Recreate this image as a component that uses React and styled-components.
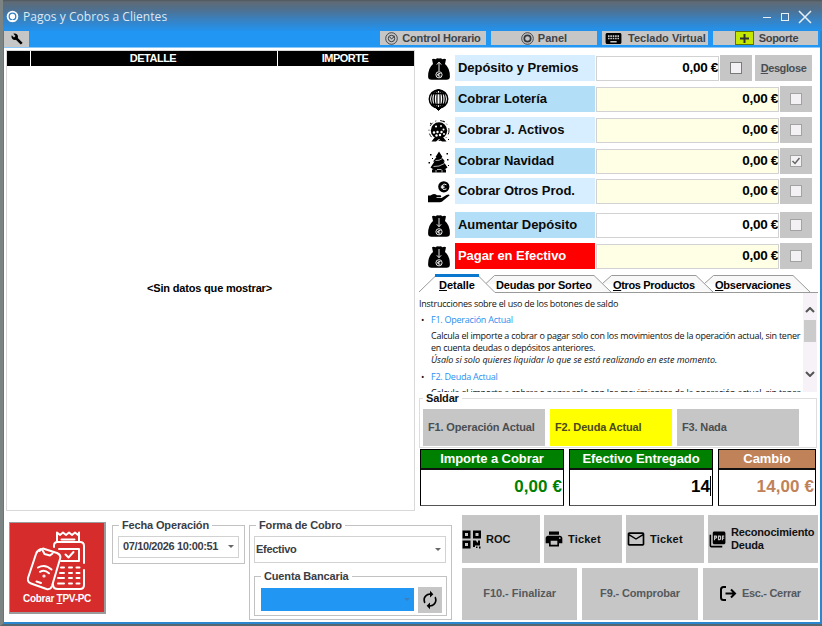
import React, { useState } from 'react';
import styled, { createGlobalStyle, css } from 'styled-components';
import { MdBuild, MdKeyboard, MdPrint, MdMailOutline, MdPictureAsPdf, MdAutorenew } from 'react-icons/md';

const GlobalStyle = createGlobalStyle`
    * {
        box-sizing: border-box;
    }

    body {
        margin: 0;
        overflow: hidden;
        font: bold 11px/13px "Liberation Sans", Arial, sans-serif;
        letter-spacing: -0.15px;
        color: #000;
    }

    button {
        font: inherit;
        letter-spacing: inherit;
        color: inherit;
        border: 0;
        padding: 0;
    }

    svg {
        display: block;
        flex: none;
    }
`;

const Window = styled.div`
    width: 822px;
    height: 626px;
    display: flex;
    flex-direction: column;
    background: #fff;
    border-left: 3px solid #7b8383;
    border-bottom: 2px solid #56676f;
`;

const TitleBar = styled.header`
    height: 31px;
    flex: none;
    display: flex;
    align-items: center;
    padding: 2px 10px 0 3px;
    background: linear-gradient(#50565c 0, #5f6b75 2px, #506f8c 9px, #3a80bd 19px, #2292ee 31px);
    color: #dfe9f2;
`;

const Title = styled.h1`
    flex: 1;
    margin: 0 0 0 4px;
    font: 12px/16px "Open Sans", "Noto Sans", sans-serif;
    letter-spacing: 0.05px;
`;

const WindowControls = styled.div`
    display: flex;
    align-items: center;
`;

const Frame = styled.div`
    flex: 1;
    display: flex;
    flex-direction: column;
    border: solid #2b86d0;
    border-width: 0 2px 2px 1px;
`;

const Toolbar = styled.nav`
    height: 17px;
    flex: none;
    display: flex;
    gap: 5px;
    align-items: flex-start;
    background: #2196f3;
    border-bottom: 1px solid #8cc8fa;
    padding-right: 2px;
`;

const ToolButton = styled.button`
    width: ${({ $width }) => $width || 106}px;
    height: 14px;
    display: flex;
    align-items: center;
    justify-content: center;
    gap: ${({ $gap }) => $gap || 4}px;
    background: #c6c6c6;
    color: #3f4347;
    letter-spacing: ${({ $spacing }) => $spacing || 0}px;
    padding-left: ${({ $indent }) => $indent || 0}px;
`;

const SettingsButton = styled(ToolButton)`
    width: 25px;
    height: 16px;
    margin-right: auto;
    color: #000;
`;

const PlusBox = styled.span`
    width: 19px;
    height: 14px;
    display: flex;
    align-items: center;
    justify-content: center;
    background: #c4e800;
    border: 1px solid #5f7300;
`;

const Upper = styled.div`
    display: flex;
    justify-content: space-between;
    height: 463px;
    padding: 2px 2px 0 2px;
`;

const Grid = styled.section`
    width: 409px;
    height: 461px;
    display: flex;
    flex-direction: column;
    border: 1px solid #d9d9d9;
`;

const GridHead = styled.div`
    display: grid;
    grid-template-columns: 23px 246px 1fr;
    gap: 1px;
    height: 15px;
    background: #fff;
`;

const GridHeadCell = styled.div`
    background: #000;
    color: #fff;
    text-align: center;
    line-height: 15px;
    letter-spacing: -0.5px;
    padding-right: 2px;
`;

const GridEmpty = styled.div`
    flex: 1;
    display: flex;
    align-items: center;
    justify-content: center;
    padding: 1px 2px 0 0;
    letter-spacing: -0.18px;
`;

const Side = styled.section`
    width: 399px;
    display: flex;
    flex-direction: column;
    padding-top: 5px;
`;

const Row = styled.div`
    display: flex;
    height: 26px;
    margin-bottom: ${({ $after }) => $after ?? 5}px;
    padding: 0 6px 0 8px;
`;

const RowIcon = styled.div`
    width: 28px;
    display: flex;
    align-items: center;
    padding: 2px 0 0 1px;
`;

const tones = { pale: '#d6eeff', sky: '#b3def7', red: '#ff0000' };

const RowLabel = styled.button`
    width: 140px;
    margin-right: 1px;
    text-align: left;
    padding: 0 0 1px 3px;
    font-size: 13px;
    letter-spacing: -0.05px;
    background: ${({ $tone }) => tones[$tone]};
    color: ${({ $tone }) => ($tone === 'red' ? '#fff' : '#0a0a0a')};
`;

const RowValue = styled.div`
    flex: 1;
    height: 25px;
    margin-top: 1px;
    padding-top: 3px;
    border: 1px solid #d2d2d2;
    text-align: right;
    font-size: 13.5px;
    line-height: 15px;
    letter-spacing: -0.3px;
    background: ${({ $locked }) => ($locked ? '#ffffe6' : '#fff')};
`;

const RowCheck = styled.label`
    width: 32px;
    margin-left: 1px;
    display: flex;
    align-items: center;
    justify-content: center;
    background: #c6c6c6;
`;

const CheckBox = styled.span`
    width: 12px;
    height: 12px;
    display: flex;
    align-items: center;
    justify-content: center;
    border: 1px solid ${({ $strong }) => ($strong ? '#7a7a7a' : '#a2a2a2')};
    background: #f3f1f3;
`;

const BreakdownButton = styled.button`
    width: 57px;
    margin-left: 3px;
    background: #c6c6c6;
    color: #4a4e52;
    letter-spacing: -0.4px;
`;

const TabBar = styled.div`
    position: relative;
    height: 19px;
    flex: none;
    display: flex;
    padding-left: 20px;
`;

const TabShapes = styled.svg`
    position: absolute;
    inset: 0;
`;

const Tab = styled.button`
    position: relative;
    width: ${({ $width }) => $width}px;
    padding-top: 3px;
    text-align: left;
    background: none;
    letter-spacing: ${({ $spacing }) => $spacing}px;
    white-space: nowrap;
`;

const Help = styled.div`
    height: 99px;
    display: flex;
    overflow: hidden;
    font: 9px/12px "Open Sans", "Noto Sans", sans-serif;
    letter-spacing: -0.24px;
    color: #111;
`;

const HelpText = styled.div`
    flex: 1;
    padding-top: 5px;
    white-space: nowrap;

    p {
        margin: 0;
    }

    ul {
        margin: 0;
        padding: 0 0 0 12px;
        list-style: none;
    }

    li {
        margin-top: 4px;
    }

    li + li {
        margin-top: 5px;
    }

    li p {
        margin-top: 4px;
    }

    em {
        letter-spacing: -0.03px;
    }
`;

const HelpLink = styled.a`
    color: #2a8ff0;

    &::before {
        content: "•";
        display: inline-block;
        width: 10px;
        margin-left: -10px;
        color: #111;
    }
`;

const ScrollBar = styled.div`
    width: 14px;
    margin-right: 1px;
    display: flex;
    flex-direction: column;
    align-items: center;
    background: #f6f2f7;
    padding-top: 14px;
`;

const ScrollThumb = styled.div`
    width: 12px;
    height: 22px;
    margin: 7px 0 29px;
    background: #cbcbcb;
`;

const Group = styled.fieldset`
    min-width: 0;
    margin: 0;
    padding: 0;
    border: 1px solid #c2c2c2;
`;

const GroupTitle = styled.legend`
    margin-left: ${({ $left }) => $left || 5}px;
    padding: 0 3px;
    color: #3a3d45;
`;

const SettleGroup = styled(Group)`
    height: 56px;
    margin: 0 1px 1px 0;
    border-color: #dedede;

    ${GroupTitle} {
        margin-left: 3px;
        color: #111;
    }
`;

const SettleButtons = styled.div`
    display: flex;
    gap: 5px;
    padding: 4px 0 0 3px;
`;

const SettleButton = styled.button`
    width: 122px;
    height: 37px;
    padding-left: 5px;
    text-align: left;
    background: ${({ $active }) => ($active ? '#ffff00' : '#c6c6c6')};
    color: ${({ $active }) => ($active ? '#4a4a1c' : '#4a4e52')};
`;

const Totals = styled.div`
    display: flex;
    gap: 5px;
    padding-left: 1px;
`;

const Total = styled.div`
    width: ${({ $width }) => $width}px;
    height: 57px;
    border: 1px solid #000;
    border-bottom-color: #555;
    display: flex;
    flex-direction: column;
    color: ${({ $color }) => $color};
`;

const TotalTitle = styled.div`
    height: 20px;
    border-bottom: 2px solid #111;
    font-size: 13px;
    line-height: 18px;
    letter-spacing: -0.07px;
    text-align: center;
    color: #fff;
    background: ${({ $bg }) => $bg};
`;

const TotalValue = styled.div`
    flex: 1;
    display: flex;
    align-items: center;
    justify-content: flex-end;
    padding: 0 1px 3px 0;
    font-size: 17px;
    letter-spacing: 0.1px;

    ${({ $editing }) =>
        $editing &&
        css`
            &::after {
                content: "";
                width: 1px;
                height: 20px;
                background: #000;
            }
        `}
`;

const Lower = styled.div`
    flex: 1;
    display: flex;
    padding: 4px 2px 0 5px;
`;

const CardButton = styled.button`
    width: 97px;
    height: 92px;
    margin: 7px 6px 0 0;
    display: flex;
    flex-direction: column;
    align-items: center;
    padding-top: 8px;
    background: #d62c2b;
    border: solid #9b9b9b;
    border-width: 1px 2px 2px 1px;
    color: #fff;
    font-size: 10px;
    letter-spacing: -0.28px;
`;

const CardCaption = styled.span`
    margin-top: 1px;
`;

const DateGroup = styled(Group)`
    width: 133px;
    height: 45px;
    margin: 4px 5px 0 0;
`;

const Select = styled.div`
    display: flex;
    align-items: center;
    justify-content: space-between;
    height: ${({ $height }) => $height}px;
    margin: ${({ $margin }) => $margin};
    padding: 0 4px 1px ${({ $indent }) => $indent}px;
    border: 1px solid #d2d2d2;
    color: #3a3d45;
    letter-spacing: ${({ $spacing }) => $spacing}px;

    &::after {
        content: "";
        border: solid transparent;
        border-width: 3px 3px 0;
        border-top-color: #666;
    }
`;

const MethodGroup = styled(Group)`
    width: 203px;
    height: 101px;
    margin: 4px 0 0 -1px;
`;

const AccountGroup = styled(Group)`
    height: 46px;
    margin: 7px 4px 0;
`;

const AccountRow = styled.div`
    display: flex;
    gap: 4px;
    padding: 4px 4px 0 6px;
`;

const AccountSelect = styled.div`
    flex: 1;
    height: 23px;
    margin-top: 1px;
    display: flex;
    align-items: center;
    justify-content: flex-end;
    padding-right: 4px;
    background: #2196f3;

    &::after {
        content: "";
        border: solid transparent;
        border-width: 3px 3px 0;
        border-top-color: #3b7fbd;
    }
`;

const RefreshButton = styled.button`
    width: 24px;
    height: 26px;
    display: flex;
    align-items: center;
    justify-content: center;
    background: #c6c6c6;
`;

const Actions = styled.div`
    margin-left: auto;
    width: 356px;
    display: flex;
    flex-direction: column;
    gap: 5px;
`;

const ActionRow = styled.div`
    display: flex;
    gap: ${({ $gap }) => $gap}px;
`;

const ActionButton = styled.button`
    flex: ${({ $width }) => ($width ? `0 0 ${$width}px` : 1)};
    height: ${({ $center }) => ($center ? 52 : 48)}px;
    display: flex;
    align-items: center;
    justify-content: ${({ $center }) => ($center ? 'center' : 'flex-start')};
    gap: ${({ $gap }) => $gap || 4}px;
    padding-bottom: ${({ $center }) => ($center ? 1 : 0)}px;
    text-align: left;
    white-space: nowrap;
    background: #c6c6c6;
    color: ${({ $center }) => ($center ? '#55595d' : '#111')};
    letter-spacing: ${({ $spacing }) => $spacing ?? -0.15}px;

    svg {
        color: #000;
    }
`;

const AppLogo = () => (
    <svg width="13" height="13" viewBox="0 0 13 13">
        <circle cx="6.5" cy="6.5" r="5.8" fill="#fff" />
        <circle cx="6.5" cy="6.5" r="3.3" fill="none" stroke="#2f82c9" strokeWidth="1.3" />
        <path d="M3 11.5 6.5 9.6 10 11.5" fill="#fff" />
    </svg>
);

const ClockLogo = ({ spiral }) => (
    <svg width="13" height="13" viewBox="0 0 13 13" fill="none" stroke="#33373b">
        <circle cx="6.5" cy="6.5" r="5.8" strokeWidth="0.9" />
        <circle cx="6.5" cy="6.5" r="3.2" strokeWidth={spiral ? 1 : 1.7} />
        {spiral && <path d="M4.8 5 6.5 7 9.8 4" />}
    </svg>
);

// "up" leaves the bag, otherwise the arrow goes into it
const BagIcon = ({ up }) => (
    <svg width="22" height="22" viewBox="0 0 22 22">
        <path d="M4 1.2q1.8-1 3.600 0q1.600-1.400 3.400-.6q1.800-.8 3.400.6q1.800-1 3.600 0L17 6Q21.900 10 21.900 18.500Q21.900 21.800 18.500 21.800H3.500Q.1 21.800 .1 18.500Q.1 10 5 6Z" fill="#000" />
        <g fill="none" stroke="#fff" strokeWidth="0.9">
            <path d={up ? 'M11 13V4M8.800 6.600 11 4.200 13.200 6.600' : 'M11 3V11.500M8.800 9.300 11 11.700 13.200 9.300'} />
            <circle cx="11" cy="16.800" r="3.100" />
            <path d="M12.500 15.500Q10 14.700 10 16.800T12.500 18.100M9 16.800H11.600" />
        </g>
    </svg>
);

const DrumIcon = () => (
    <svg width="22" height="22" viewBox="0 0 22 22" fill="none" stroke="#000">
        <ellipse cx="10.500" cy="10" rx="9.200" ry="9" strokeWidth="1.500" />
        <ellipse cx="10.500" cy="10" rx="6.800" ry="9" strokeWidth="1.300" />
        <ellipse cx="10.500" cy="10" rx="4.300" ry="9" strokeWidth="1.300" />
        <ellipse cx="10.500" cy="10" rx="1.600" ry="9" strokeWidth="1.200" />
        <path d="M4 4.500H17M4 15.500H17" strokeWidth="1.400" />
        <path d="M7.500 18.500H13.500L10.500 21.500Z" fill="#000" />
    </svg>
);

const BallsIcon = () => (
    <svg width="22" height="22" viewBox="0 0 22 22">
        <circle cx="11" cy="10.500" r="8.200" fill="#000" />
        <path d="M3.500 21.500 7 17H15L18.500 21.500H14L11 19 8 21.500Z" fill="#000" />
        <circle cx="11" cy="10.500" r="10" fill="none" stroke="#000" strokeDasharray="4 3 1 4" strokeWidth="0.900" />
        <g fill="#fff">
            <circle cx="8" cy="6.500" r="1.100" />
            <circle cx="13" cy="6" r="0.900" />
            <circle cx="15.500" cy="9.500" r="1" />
            <circle cx="6" cy="12.500" r="1.200" />
            <circle cx="9.500" cy="12" r="1.200" />
            <circle cx="8.500" cy="15.500" r="1.200" />
            <circle cx="12" cy="15" r="1.200" />
            <circle cx="13.500" cy="12" r="1.200" />
            <circle cx="16" cy="14" r="1" />
        </g>
        <path d="M2 3l1.500 1M15 1l2 1M20 19l1 1" stroke="#000" />
    </svg>
);

const TreeIcon = () => (
    <svg width="22" height="22" viewBox="0 0 22 22">
        <path d="M11 .5 14.500 6H13.500L17 10.500H15.500L19.500 16.500L16.500 18.500H18V21.500H4V18.500H5.500L2.500 16.500L6.500 10.500H5L8.500 6H7.500Z" fill="#000" />
        <path d="M7.500 9.500Q11 10 14.500 7.500M5.500 15.500Q11 16 16.500 12.500M9 18.500H13.500M8 19V21.500M14 19V21.500" stroke="#fff" strokeWidth="0.700" fill="none" />
        <g fill="#000">
            <rect x="2" y="3" width="1.500" height="1.500" />
            <rect x="18.500" y="2" width="1.500" height="1.500" />
            <rect x="4" y="7" width="1" height="1" />
            <rect x="19" y="8" width="1.500" height="1.500" />
            <rect x="0.500" y="11" width="1.500" height="1.500" />
            <rect x="20" y="14" width="1" height="1" />
        </g>
    </svg>
);

const HandIcon = () => (
    <svg width="22" height="22" viewBox="0 0 22 22">
        <circle cx="15.800" cy="5.800" r="5.600" fill="#000" />
        <path d="M18.500 3.800Q14.500 1.800 14.200 5.800T18.500 7.900M12.800 5.200H16.500M12.800 6.700H16.500" stroke="#fff" strokeWidth="1" fill="none" />
        <path d="M0 14.500H2.500Q5 12.300 7.500 13.300L9 14.200H12.500Q14 15 12.700 16.300H8.500V17H13.500L18.500 14Q21 12.800 21.700 14.300L14.500 20.300Q13.500 21.300 11.500 21.300H0Z" fill="#000" />
    </svg>
);

const QrIcon = () => (
    <svg width="19" height="19" viewBox="0 0 19 19">
        <path d="M.5 0.500H8.500V8.500H.5ZM3 3V6H6V3ZM11 .5H19V8.500H11ZM13.500 3V6H16.500V3ZM.5 10.500H8.500V18.500H.5ZM3 13V16H6V13Z" fill="#000" fillRule="evenodd" />
        <path d="M11 10.500H14L15 12.500H16V10.500H18V15.500H13V17H11ZM14 16.500H15.500V18H14ZM17 16.500H18.500V18.500H17Z" fill="#000" />
    </svg>
);

const ExitIcon = () => (
    <svg width="17" height="15" viewBox="0 0 17 15" fill="none" stroke="#000" strokeWidth="2">
        <path d="M6 1H3.500Q1 1 1 3.500V11.500Q1 14 3.500 14H6" />
        <path d="M5.500 7.500H15M11 3.500 15 7.500 11 11.500" />
    </svg>
);

const CardIcon = () => (
    <svg width="60" height="60" viewBox="0 0 60 60" fill="none" stroke="#fff" strokeWidth="2" strokeLinejoin="round" strokeLinecap="round">
        <path d="M30 11V1.500L33 4 36 1.500 39 4 42 1.500 45 4 48 1.500 51 4 52 1.500V11M34.500 8.500H47.500" />
        <path d="M27 16V14.500Q27 11 30.500 11H53Q57 11 57 15V32M57 39V54Q57 58 53 58H31Q26 58 26 53.500" />
        <path d="M32 18H52V30H34M38.500 23.500 41.500 26.500 46.500 21" />
        <path d="M12.500 20 16 17.500 30 22Q34.500 24 33 28L25 55Q23.500 59 19.500 58L4 52.500Q0 51 1 47L9 23Q10 19.500 14 18M16 20 17.500 23 23 24.500 25.500 22.500" />
        <path d="M11 36.500Q18 32.500 24.500 38.500M13 40.800Q17.500 38 22 42.200M9.500 50.500 14 52" />
        <circle cx="17" cy="45" r="0.600" />
        <path d="M34 36.500H37M42 36.500H45M49.500 36.500H52.500M33 42H37M42 42H45M49.500 42H52.500M31 47H37M42 47H45M49.500 47H52.500M31 52.500H37M42 52.500H45M49.500 52.500H52.500" />
    </svg>
);

const concepts = [
    { label: 'Depósito y Premios', tone: 'pale', icon: <BagIcon up />, breakdown: true },
    { label: 'Cobrar Lotería', tone: 'sky', icon: <DrumIcon />, locked: true },
    { label: 'Cobrar J. Activos', tone: 'pale', icon: <BallsIcon />, locked: true },
    { label: 'Cobrar Navidad', tone: 'sky', icon: <TreeIcon />, locked: true, after: 4 },
    { label: 'Cobrar Otros Prod.', tone: 'pale', icon: <HandIcon />, locked: true, after: 8 },
    { label: 'Aumentar Depósito', tone: 'sky', icon: <BagIcon /> },
    { label: 'Pagar en Efectivo', tone: 'red', icon: <BagIcon />, locked: true },
];

const tabs = [
    { text: 'Detalle', width: 57, spacing: -0.02, hotkey: true },
    { text: 'Deudas por Sorteo', width: 117, spacing: -0.15 },
    { text: 'Otros Productos', width: 102, spacing: -0.34, hotkey: true },
    { text: 'Observaciones', width: 90, spacing: -0.24, hotkey: true },
];

const settleOptions = ['F1. Operación Actual', 'F2. Deuda Actual', 'F3. Nada'];

const App = () => {
    const [checked, setChecked] = useState({ 'Cobrar Navidad': true });
    const [settle, setSettle] = useState(1);

    const toggle = (label) => {
        setChecked({ ...checked, [label]: !checked[label] });
    };

    return (
        <Window>
            <GlobalStyle />
            <TitleBar>
                <AppLogo />
                <Title>Pagos y Cobros a Clientes</Title>
                <WindowControls>
                    <svg width="52" height="14" viewBox="0 0 52 14" fill="none" stroke="#e8f0f7">
                        <path d="M3 7.500H11" />
                        <rect x="21.500" y="3.500" width="7" height="7" />
                        <path d="M39 1 51 13M51 1 39 13" strokeWidth="1.500" />
                    </svg>
                </WindowControls>
            </TitleBar>

            <Frame>
                <Toolbar>
                    <SettingsButton><MdBuild size={12} /></SettingsButton>
                    <ToolButton $spacing={-0.2}><ClockLogo spiral />Control Horario</ToolButton>
                    <ToolButton><ClockLogo />Panel</ToolButton>
                    <ToolButton $gap={5}><MdKeyboard size={19} color="#000" />Teclado Virtual</ToolButton>
                    <ToolButton $width={105} $gap={5} $spacing={-0.26} $indent={2}>
                        <PlusBox>
                            <svg width="9" height="9" viewBox="0 0 9 9"><path d="M4.500 0V9M0 4.500H9" stroke="#333" strokeWidth="2" /></svg>
                        </PlusBox>
                        Soporte
                    </ToolButton>
                </Toolbar>

                <Upper>
                    <Grid>
                        <GridHead>
                            <GridHeadCell />
                            <GridHeadCell>DETALLE</GridHeadCell>
                            <GridHeadCell>IMPORTE</GridHeadCell>
                        </GridHead>
                        <GridEmpty>&lt;Sin datos que mostrar&gt;</GridEmpty>
                    </Grid>

                    <Side>
                        {concepts.map((c) => (
                            <Row key={c.label} $after={c.after}>
                                <RowIcon>{c.icon}</RowIcon>
                                <RowLabel $tone={c.tone}>{c.label}</RowLabel>
                                <RowValue $locked={c.locked}>0,00 €</RowValue>
                                <RowCheck onClick={() => toggle(c.label)}>
                                    <CheckBox $strong={c.breakdown}>
                                        {checked[c.label] && (
                                            <svg width="10" height="10" viewBox="0 0 10 10">
                                                <path d="M1.500 5 4 7.500 8.500 2" fill="none" stroke="#666" strokeWidth="1.500" />
                                            </svg>
                                        )}
                                    </CheckBox>
                                </RowCheck>
                                {c.breakdown && <BreakdownButton><u>D</u>esglose</BreakdownButton>}
                            </Row>
                        ))}

                        <TabBar>
                            <TabShapes width="399" height="19" viewBox="0 0 399 19" fill="none" stroke="#9a9a9a">
                                <path d="M285.500 9.500 294.500 1.500H374L391 18" fill="#f8f8f8" />
                                <path d="M183.500 9.500 192.500 1.500H277L294 18" fill="#f8f8f8" />
                                <path d="M67 9.500 75.500 1.500H175L192 18" fill="#f8f8f8" />
                                <path d="M0 18 17 1.500H59L76 18.500H399" fill="#fff" />
                                <path d="M16 1.500H60" stroke="#0b78d0" strokeWidth="3" />
                            </TabShapes>
                            {tabs.map((t) => (
                                <Tab key={t.text} $width={t.width} $spacing={t.spacing}>
                                    {t.hotkey ? <><u>{t.text[0]}</u>{t.text.slice(1)}</> : t.text}
                                </Tab>
                            ))}
                        </TabBar>

                        <Help>
                            <HelpText>
                                <p>Instrucciones sobre el uso de los botones de saldo</p>
                                <ul>
                                    <li>
                                        <HelpLink>F1. Operación Actual</HelpLink>
                                        <p>
                                            Calcula el importe a cobrar o pagar solo con los movimientos de la operación actual, sin tener<br />
                                            en cuenta deudas o depósitos anteriores.<br />
                                            <em>Úsalo si solo quieres liquidar lo que se está realizando en este momento.</em>
                                        </p>
                                    </li>
                                    <li>
                                        <HelpLink>F2. Deuda Actual</HelpLink>
                                        <p>Calcula el importe a cobrar o pagar solo con los movimientos de la operación actual, sin tener</p>
                                    </li>
                                </ul>
                            </HelpText>
                            <ScrollBar>
                                <svg width="10" height="6" viewBox="0 0 10 6"><path d="M1 5 5 1 9 5" fill="none" stroke="#555" strokeWidth="2" /></svg>
                                <ScrollThumb />
                                <svg width="10" height="6" viewBox="0 0 10 6"><path d="M1 1 5 5 9 1" fill="none" stroke="#555" strokeWidth="2" /></svg>
                            </ScrollBar>
                        </Help>

                        <SettleGroup>
                            <GroupTitle>Saldar</GroupTitle>
                            <SettleButtons>
                                {settleOptions.map((text, i) => (
                                    <SettleButton key={text} $active={settle === i} onClick={() => setSettle(i)}>{text}</SettleButton>
                                ))}
                            </SettleButtons>
                        </SettleGroup>

                        <Totals>
                            <Total $width={144} $color="#008000">
                                <TotalTitle $bg="#008000">Importe a Cobrar</TotalTitle>
                                <TotalValue>0,00 €</TotalValue>
                            </Total>
                            <Total $width={144} $color="#000">
                                <TotalTitle $bg="#008000">Efectivo Entregado</TotalTitle>
                                <TotalValue $editing>14</TotalValue>
                            </Total>
                            <Total $width={98} $color="#bf8259">
                                <TotalTitle $bg="#bf8259">Cambio</TotalTitle>
                                <TotalValue>14,00 €</TotalValue>
                            </Total>
                        </Totals>
                    </Side>
                </Upper>

                <Lower>
                    <CardButton>
                        <CardIcon />
                        <CardCaption>Cobrar <u>T</u>PV-PC</CardCaption>
                    </CardButton>
                    <DateGroup>
                        <GroupTitle $left={6}>Fecha Operación</GroupTitle>
                        <Select $height={22} $margin="4px 5px 0" $indent={4} $spacing={-0.37}>07/10/2026 10:00:51</Select>
                    </DateGroup>
                    <MethodGroup>
                        <GroupTitle $left={6}>Forma de Cobro</GroupTitle>
                        <Select $height={27} $margin="4px 5px 0 4px" $indent={1} $spacing={-0.3}>Efectivo</Select>
                        <AccountGroup>
                            <GroupTitle $left={6}>Cuenta Bancaria</GroupTitle>
                            <AccountRow>
                                <AccountSelect />
                                <RefreshButton><MdAutorenew size={20} /></RefreshButton>
                            </AccountRow>
                        </AccountGroup>
                    </MethodGroup>

                    <Actions>
                        <ActionRow $gap={4}>
                            <ActionButton $width={78} $spacing={0} $gap={5}><QrIcon />ROC</ActionButton>
                            <ActionButton $width={78} $spacing={0.2} $gap={4}><MdPrint size={20} />Ticket</ActionButton>
                            <ActionButton $width={78} $spacing={0.2} $gap={4}><MdMailOutline size={20} />Ticket</ActionButton>
                            <ActionButton $spacing={-0.16} $gap={4}>
                                <MdPictureAsPdf size={19} />
                                <span>Reconocimiento<br />Deuda</span>
                            </ActionButton>
                        </ActionRow>
                        <ActionRow $gap={5}>
                            <ActionButton $center $spacing={-0.03}>F10.- Finalizar</ActionButton>
                            <ActionButton $center>F9.- Comprobar</ActionButton>
                            <ActionButton $center $spacing={-0.3} $gap={5}><ExitIcon />Esc.- Cerrar</ActionButton>
                        </ActionRow>
                    </Actions>
                </Lower>
            </Frame>
        </Window>
    );
};

export default App;
